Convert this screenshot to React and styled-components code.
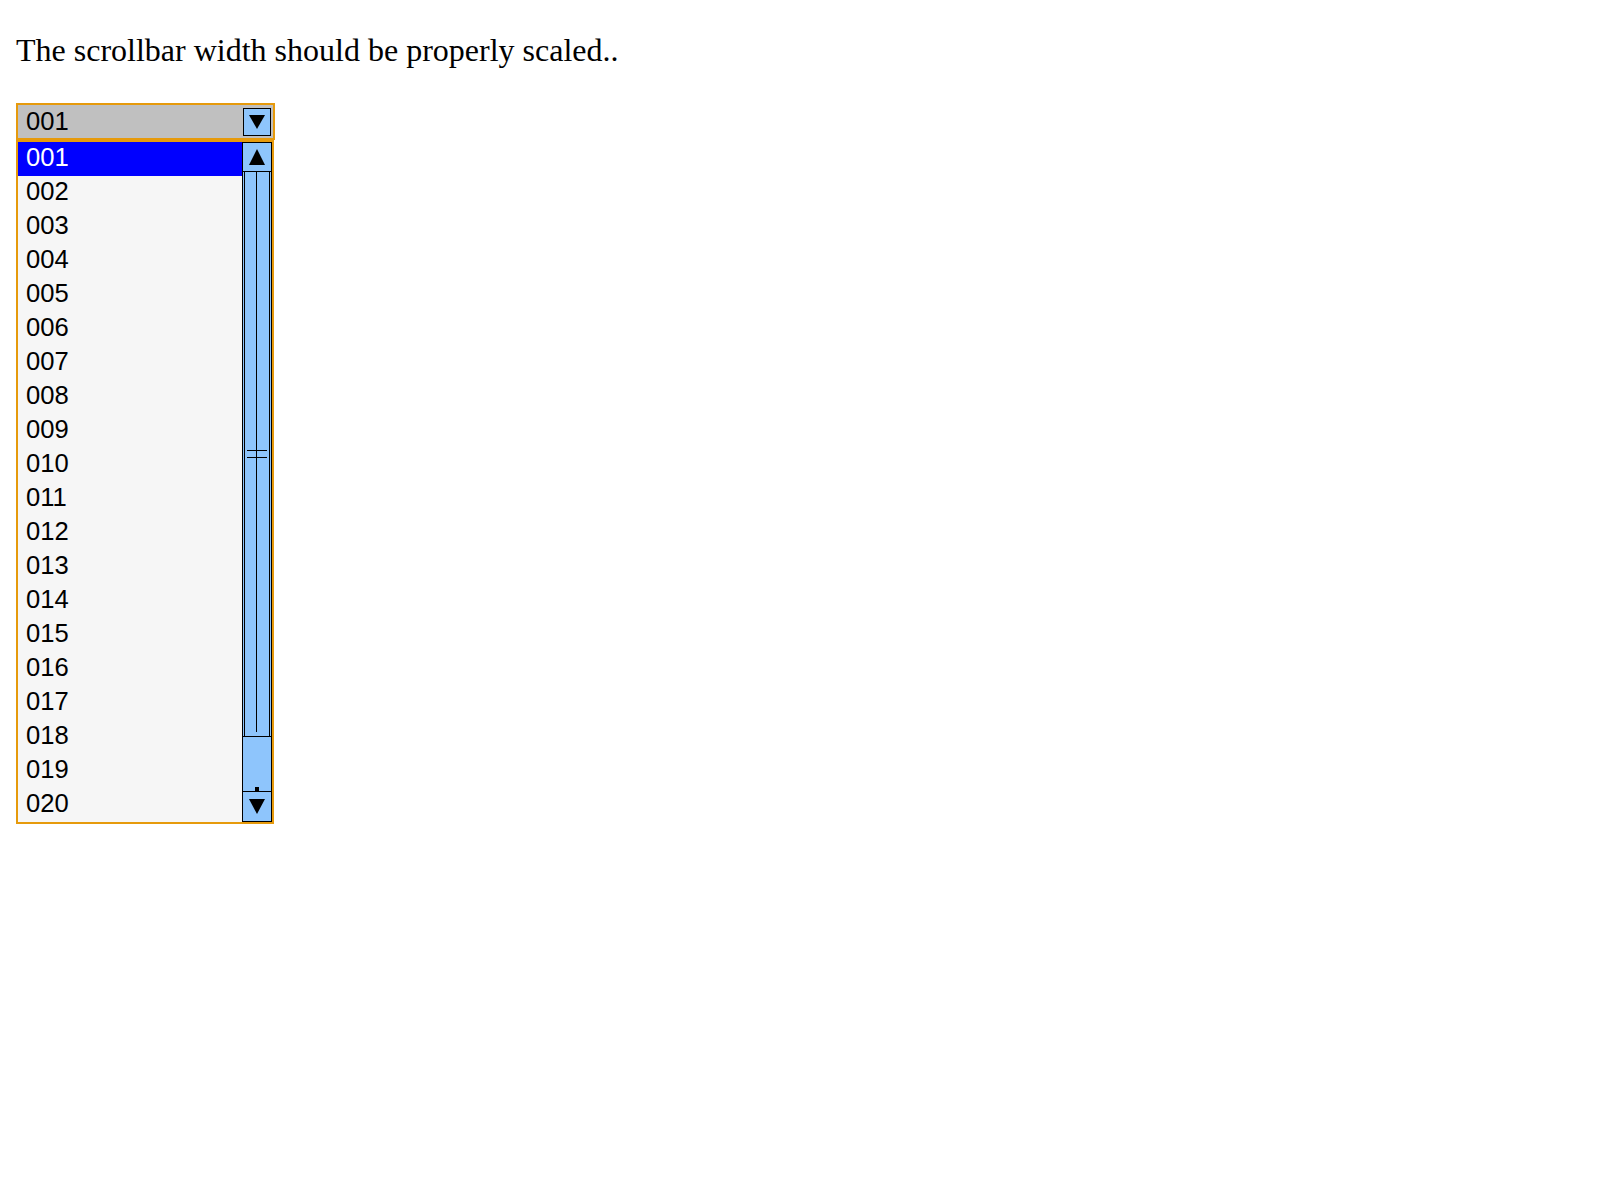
import React from 'react'
import styled, { createGlobalStyle } from 'styled-components'

const ITEMS = Array.from({ length: 20 }, (_, i) => String(i + 1).padStart(3, '0'))

const GlobalStyle = createGlobalStyle`
    body {
        margin: 0;
        background: #FFFFFF;
        color: #000000;
    }
`

const Page = styled.div`
    padding: 32px 0 0 16px;
`

const Title = styled.p`
    margin: 0 0 34px;
    font-family: "Liberation Serif", "Times New Roman", serif;
    font-size: 32px;
    line-height: normal;
`

const Dropdown = styled.div`
    display: flex;
    flex-direction: column;
    width: 259px;
    font-family: "Liberation Sans", Arial, sans-serif;
    font-size: 25.6px;
`

const ComboBox = styled.div`
    display: flex;
    align-items: center;
    box-sizing: border-box;
    width: 259px;
    height: 37px;
    padding: 0 2px 0 8px;
    border: 2px solid #E69A0C;
    background-color: #C0C0C0;
`

const ComboValue = styled.span`
    flex: 1;
    line-height: 30px;
    margin-bottom: 1px;
`

const ArrowButton = styled.div`
    display: flex;
    align-items: center;
    justify-content: center;
    box-sizing: border-box;
    width: 28px;
    height: 28px;
    margin-top: 1px;
    border: 1px solid #000000;
    background-color: #8EC5FC;
`

const ListBox = styled.div`
    display: flex;
    box-sizing: border-box;
    width: 258px;
    border: 2px solid #E69A0C;
    background-color: #F6F6F6;
`

const Options = styled.ul`
    flex: 1;
    margin: 0;
    padding: 0;
    list-style: none;
`

const Option = styled.li`
    height: 34px;
    padding-left: 8px;
    line-height: 30px;
    background-color: ${p => (p.$selected ? '#0000FF' : 'transparent')};
    color: ${p => (p.$selected ? '#FFFFFF' : '#000000')};
`

const ScrollBar = styled.div`
    display: flex;
    flex-direction: column;
    box-sizing: border-box;
    width: 30px;
    border: 1px solid #000000;
    background-color: #8EC5FC;
`

const ScrollButton = styled.div`
    position: relative;
    display: flex;
    align-items: center;
    justify-content: center;
    box-sizing: border-box;
    height: ${p => (p.$down ? '30px' : '29px')};
    border-top: ${p => (p.$down ? '1px solid #000000' : 'none')};
    border-bottom: ${p => (p.$down ? 'none' : '1px solid #000000')};

    ${p => p.$down && `
        &::before {
            content: '';
            position: absolute;
            top: -5px;
            left: 12px;
            width: 4px;
            height: 4px;
            background: #000000;
        }
    `}
`

const Thumb = styled.div`
    box-sizing: border-box;
    height: 565px;
    border-bottom: 1px solid #000000;
`

const ThumbBody = styled.div`
    position: relative;
    box-sizing: border-box;
    height: 100%;
    margin: 0 1px;
    border-left: 1px solid #000000;
    border-right: 1px solid #000000;

    &::before {
        content: '';
        position: absolute;
        top: 0;
        bottom: 4px;
        left: 11px;
        width: 1px;
        background: #000000;
    }

    &::after {
        content: '';
        position: absolute;
        top: 278px;
        left: 2px;
        width: 20px;
        height: 6px;
        border-top: 1px solid #000000;
        border-bottom: 1px solid #000000;
    }
`

const Track = styled.div`
    flex: 1;
`

function Triangle({ up, width = 16, height = 16 }) {
    const points = up
        ? `${width / 2},0 ${width},${height} 0,${height}`
        : `0,0 ${width},0 ${width / 2},${height}`
    return (
        <svg width={width} height={height} viewBox={`0 0 ${width} ${height}`}>
            <polygon points={points} fill="#000000" />
        </svg>
    )
}

export default function App() {
    return (
        <Page>
            <GlobalStyle />
            <Title>The scrollbar width should be properly scaled..</Title>
            <Dropdown>
                <ComboBox>
                    <ComboValue>001</ComboValue>
                    <ArrowButton>
                        <Triangle width={16} height={14} />
                    </ArrowButton>
                </ComboBox>
                <ListBox>
                    <Options>
                        {ITEMS.map((item, i) => (
                            <Option key={item} $selected={i === 0}>{item}</Option>
                        ))}
                    </Options>
                    <ScrollBar>
                        <ScrollButton>
                            <Triangle up />
                        </ScrollButton>
                        <Thumb>
                            <ThumbBody />
                        </Thumb>
                        <Track />
                        <ScrollButton $down>
                            <Triangle width={16} height={15} />
                        </ScrollButton>
                    </ScrollBar>
                </ListBox>
            </Dropdown>
        </Page>
    )
}
